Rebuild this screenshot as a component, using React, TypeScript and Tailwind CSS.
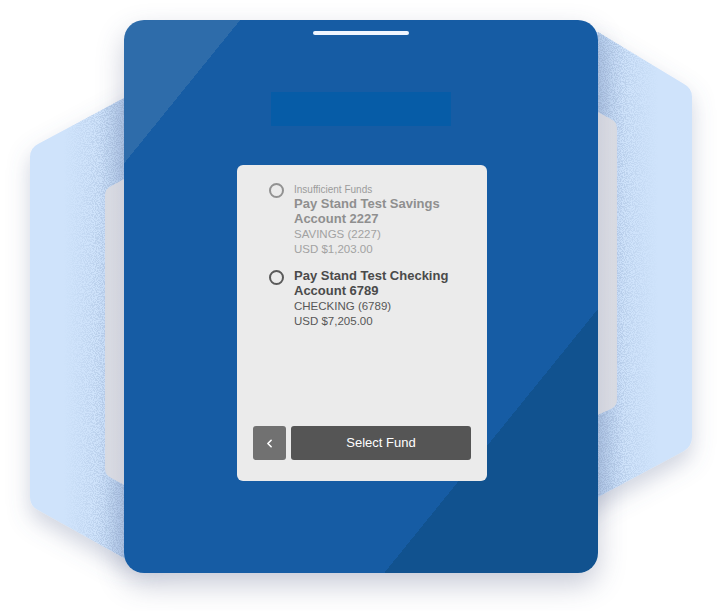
import { ChevronLeft } from 'lucide-react'

interface Fund {
  name: string[]
  type: string
  balance: string
  note?: string
  disabled?: boolean
}

const funds: Fund[] = [
  {
    note: 'Insufficient Funds',
    name: ['Pay Stand Test Savings', 'Account 2227'],
    type: 'SAVINGS (2227)',
    balance: 'USD $1,203.00',
    disabled: true,
  },
  {
    name: ['Pay Stand Test Checking', 'Account 6789'],
    type: 'CHECKING (6789)',
    balance: 'USD $7,205.00',
  },
]

// outer frame + two side windows (drawn behind the tablet)
const FRAME =
  'M200 60 L124 98 L38 144 Q30 148 30 157 L30 497 Q30 506 38 510 L124 558 L200 545 L540 545 L598 497 L684 451 Q692 446 692 437 L692 97 Q692 88 684 84 L598 32 L540 45 Z'
const HOLE_L = 'M124 179 L111 186 Q105 189 105 195 L105 469 Q105 475 111 478 L124 485 Z'
const HOLE_R = 'M598 112 L611 119 Q617 122 617 128 L617 400 Q617 406 611 409 L598 415 Z'

function Backdrop() {
  return (
    <svg className="absolute inset-0" width="721" height="611" viewBox="0 0 721 611">
      <defs>
        <filter id="frameShadow" x="-20%" y="-20%" width="140%" height="140%">
          <feDropShadow dx="0" dy="10" stdDeviation="11" floodColor="#5f6d94" floodOpacity="0.3" />
        </filter>
        <filter id="grain" x="0" y="0" width="100%" height="100%">
          <feTurbulence type="fractalNoise" baseFrequency="0.9" numOctaves="2" seed="7" />
          <feColorMatrix type="matrix" values="0 0 0 0 0.42  0 0 0 0 0.55  0 0 0 0 0.76  7 0 0 0 -3.1" />
        </filter>
        <linearGradient id="fadeL" x1="0" x2="1">
          <stop offset="0" stopColor="#fff" stopOpacity="0" />
          <stop offset="1" stopColor="#fff" stopOpacity="1" />
        </linearGradient>
        <linearGradient id="fadeR" x1="1" x2="0">
          <stop offset="0" stopColor="#fff" stopOpacity="0" />
          <stop offset="1" stopColor="#fff" stopOpacity="1" />
        </linearGradient>
        <linearGradient id="bandL" x1="0" x2="1">
          <stop offset="0" stopColor="#a9c5ea" stopOpacity="0" />
          <stop offset="1" stopColor="#a9c5ea" stopOpacity="0.55" />
        </linearGradient>
        <linearGradient id="bandR" x1="1" x2="0">
          <stop offset="0" stopColor="#a9c5ea" stopOpacity="0" />
          <stop offset="1" stopColor="#a9c5ea" stopOpacity="0.55" />
        </linearGradient>
        <linearGradient id="holeL" x1="0" x2="1">
          <stop offset="0" stopColor="#dcdee5" />
          <stop offset="1" stopColor="#e7e8ed" />
        </linearGradient>
        <linearGradient id="holeR" x1="1" x2="0">
          <stop offset="0" stopColor="#dcdee5" />
          <stop offset="1" stopColor="#e7e8ed" />
        </linearGradient>
        <mask id="grainMask">
          <rect x="64" y="0" width="60" height="611" fill="url(#fadeL)" />
          <rect x="598" y="0" width="60" height="611" fill="url(#fadeR)" />
        </mask>
        <clipPath id="frameClip">
          <path d={`${FRAME} ${HOLE_L} ${HOLE_R}`} clipRule="evenodd" />
        </clipPath>
      </defs>

      <path d={FRAME} fill="#cfe3fb" filter="url(#frameShadow)" />
      <path d={HOLE_L} fill="url(#holeL)" />
      <path d={HOLE_R} fill="url(#holeR)" />
      <g clipPath="url(#frameClip)">
        <rect x="100" y="0" width="24" height="611" fill="url(#bandL)" />
        <rect x="598" y="0" width="24" height="611" fill="url(#bandR)" />
        <rect x="0" y="0" width="721" height="611" filter="url(#grain)" mask="url(#grainMask)" />
      </g>
    </svg>
  )
}

function Radio({ disabled }: { disabled?: boolean }) {
  return (
    <span
      className={`block h-[15px] w-[15px] shrink-0 rounded-full border-2 ${
        disabled ? 'border-[#929292]' : 'mt-[2px] border-[#5a5a5a]'
      }`}
    />
  )
}

export default function App() {
  return (
    <div className="relative h-[611px] w-[721px] overflow-hidden bg-white font-['Liberation_Sans',Arial,sans-serif]">
      <Backdrop />

      {/* tablet */}
      <div className="relative z-10 ml-[124px] mt-[20px] flex h-[553px] w-[474px] flex-col items-center rounded-[20px] bg-[linear-gradient(129deg,#2e6caa_12.6%,#165ca4_12.6%,#165ca4_76.8%,#11528f_76.8%)] pt-[11px] shadow-[0_12px_28px_rgba(60,72,115,0.28)]">
        <div className="h-[4px] w-[96px] rounded-full bg-[#eef5ff]" />
        <div className="mt-[57px] h-[34px] w-[180px] bg-[#065ca7]" />

        {/* fund picker */}
        <div className="ml-[2px] mt-[39px] flex h-[316px] w-[250px] flex-col rounded-[6px] bg-[#ebebeb] px-4 pb-[21px] pt-[18px]">
          <div className="flex flex-col gap-[11px] pl-4">
            {funds.map((f) => (
              <div key={f.type} className="flex gap-[10px]">
                <Radio disabled={f.disabled} />
                <div className="flex flex-col">
                  {f.note && (
                    <span className="text-[10px] leading-[13px] text-[#9b9b9b]">{f.note}</span>
                  )}
                  <span
                    className={`text-[13px] font-bold leading-[15px] ${
                      f.disabled ? 'text-[#8f8f8f]' : 'text-[#4a4a4a]'
                    }`}
                  >
                    {f.name[0]}
                    <br />
                    {f.name[1]}
                  </span>
                  <span
                    className={`mt-[1px] text-[11.5px] leading-[15px] ${
                      f.disabled ? 'text-[#a2a2a2]' : 'text-[#575757]'
                    }`}
                  >
                    {f.type}
                    <br />
                    {f.balance}
                  </span>
                </div>
              </div>
            ))}
          </div>

          <div className="mt-auto flex gap-[5px]">
            <button className="flex h-[34px] w-[33px] items-center justify-center rounded-[3px] bg-[#717171] text-white">
              <ChevronLeft size={13} strokeWidth={3} />
            </button>
            <button className="flex h-[34px] flex-1 items-center justify-center rounded-[3px] bg-[#555555] text-[13px] text-white">
              Select Fund
            </button>
          </div>
        </div>
      </div>
    </div>
  )
}
